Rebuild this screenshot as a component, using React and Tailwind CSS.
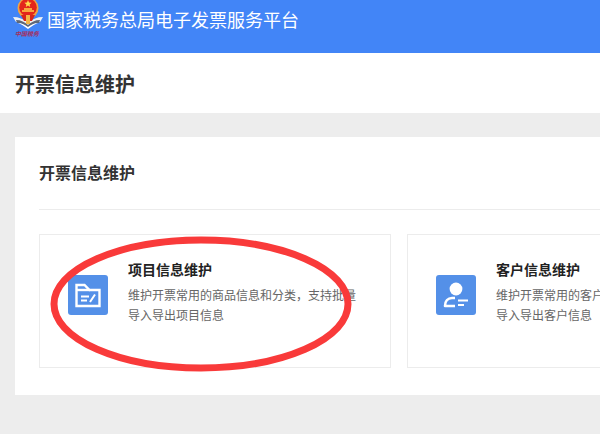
import React from 'react';

const cards = [
  {
    id: 'project',
    title: '项目信息维护',
    desc: '维护开票常用的商品信息和分类，支持批量导入导出项目信息',
    icon: FolderIcon,
  },
  {
    id: 'customer',
    title: '客户信息维护',
    desc: '维护开票常用的客户信息和分类，支持批量导入导出客户信息',
    icon: CustomerIcon,
  },
];

function FolderIcon() {
  return (
    <svg viewBox="0 0 40 40" className="mt-4 size-10 shrink-0" fill="none" aria-hidden="true">
      <rect width="40" height="40" rx="3" fill="#5490e8" />
      <g stroke="#fff" strokeWidth="2.4">
        <path d="M8.5 31V10H16.500l5 5H31.500V31Z" />
        <path d="M9 15h13" />
        <path d="M13 21.500h8M13 25.500h6M27 19.500l-5 7.500" strokeWidth="2" />
      </g>
    </svg>
  );
}

function CustomerIcon() {
  return (
    <svg viewBox="0 0 40 40" className="mt-4 size-10 shrink-0" fill="none" aria-hidden="true">
      <rect width="40" height="40" rx="3" fill="#5490e8" />
      <circle cx="20" cy="14" r="6.4" fill="#fff" />
      <g stroke="#fff" strokeWidth="2.6">
        <path d="M19 23h-3c-4 0-7 3-7 8h10" strokeLinejoin="round" />
        <path d="M22 25.500h10M22 30h6" strokeWidth="2" />
      </g>
    </svg>
  );
}

function TaxEmblem() {
  return (
    <svg viewBox="0 0 31 40" className="h-10 w-[31px] shrink-0" aria-hidden="true">
      {/* ribbon */}
      <path d="M1 17c6 0 10 2 15 5 5-3 9-5 15-5l-3 5c-5 0-8 2-12 6-4-4-7-6-12-6Z" fill="#eef1f5" />
      <path d="M4 20c5 0 9 2 12 5 3-3 7-5 12-5l-1 3c-4 0-8 2-11 5-3-3-7-5-11-5Z" fill="#5f6878" />
      <path d="M6 23c4 0 7 2 10 4 3-2 6-4 10-4-3 1-6 3-10 6-4-3-7-5-10-6Z" fill="#fff" />
      {/* badge */}
      <circle cx="16" cy="8" r="10.5" fill="#f2a540" />
      <circle cx="16" cy="7.5" r="8.8" fill="#e3261c" />
      <path d="m16 0 1 2.500 2.600.2-2 1.700.6 2.500L16 5.500l-2.200 1.400.6-2.500-2-1.700 2.600-.2Z" fill="#ffdc4e" />
      <path d="M10 11h12M12 9h8" stroke="#ffd24a" strokeWidth="1.4" />
      <path d="M9 15h14l-3 6h-8Z" fill="#d9261b" />
      <path d="M14 15h4v9h-4Z" fill="#f3b548" />
      <text x="15" y="36" textAnchor="middle" fontSize="6" fontStyle="italic" fontWeight="bold" fill="#a52f5e">
        中国税务
      </text>
    </svg>
  );
}

function InfoCard({ card }) {
  const Icon = card.icon;
  return (
    <button
      type="button"
      className="flex min-h-[134px] w-[352px] shrink-0 items-start gap-5 border border-[#ececec] bg-white px-7 pt-6 text-left"
    >
      <Icon />
      <span className="block min-w-0">
        <span className="block text-sm leading-5 font-bold text-[#222]">{card.title}</span>
        <span className="mt-[6px] block text-xs leading-5 text-[#666]">{card.desc}</span>
      </span>
    </button>
  );
}

export default function App() {
  return (
    <div className="min-h-screen overflow-hidden bg-[#ededed] font-['Noto_Sans_CJK_SC',sans-serif] text-[#222]">
      <header className="flex h-[53px] items-start gap-1 bg-[#4285f7] pl-3">
        <TaxEmblem />
        <span className="pt-[7px] text-lg leading-6 text-white">国家税务总局电子发票服务平台</span>
      </header>

      <div className="bg-white px-[15px] pt-[17px] pb-[15px]">
        <h1 className="text-xl leading-7 font-bold text-[#333]">开票信息维护</h1>
      </div>

      <main className="mt-6 ml-[15px] bg-white pt-[23px] pb-[27px] pl-6">
        <h2 className="text-base leading-6 font-bold text-[#333]">开票信息维护</h2>
        <hr className="mt-[25px] mb-6 border-[#ececec]" />
        <div className="relative flex gap-4">
          {cards.map((card) => (
            <InfoCard key={card.id} card={card} />
          ))}

          {/* hand drawn marker around the first card */}
          <svg
            viewBox="0 0 302 136"
            className="pointer-events-none absolute top-[2px] left-[11px] h-[136px] w-[302px]"
            fill="none"
            aria-hidden="true"
          >
            <ellipse cx="151" cy="68" rx="147" ry="64" stroke="#f93a3a" strokeWidth="7" />
          </svg>
        </div>
      </main>
    </div>
  );
}
